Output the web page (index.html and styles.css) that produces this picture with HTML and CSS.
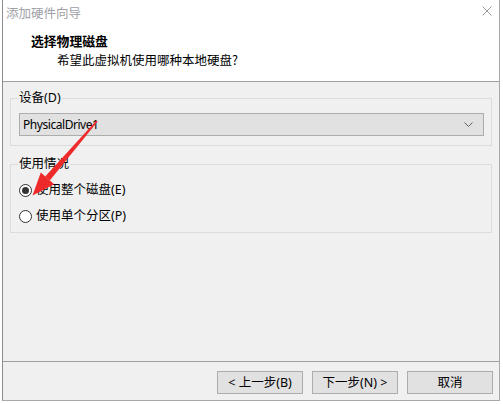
FILE: index.html
```html
<!DOCTYPE html>
<html lang="zh-CN">
<head>
<meta charset="utf-8">
<link rel="stylesheet" href="styles.css">
</head>
<body>
<div class="window">
  <div class="header">
    <div class="titlebar">
      <span class="title">添加硬件向导</span>
      <svg class="close" width="10" height="10" viewBox="0 0 10 10"><path d="M0.5 0.5 L9.5 9.5 M9.5 0.5 L0.5 9.5" stroke="#9a9a9a" stroke-width="1" fill="none"/></svg>
    </div>
    <div class="heading">
      <div class="h1">选择物理磁盘</div>
      <div class="h2">希望此虚拟机使用哪种本地硬盘?</div>
    </div>
  </div>
  <div class="content">
    <div class="group g1">
      <span class="legend">设备(D)</span>
      <div class="combo">
        <span class="combo-text">PhysicalDrive1</span>
        <svg class="chev" width="9" height="5" viewBox="0 0 9 5"><path d="M0.5 0.5 L4.5 4.5 L8.5 0.5" stroke="#606060" stroke-width="1" fill="none"/></svg>
      </div>
    </div>
    <div class="group g2">
      <span class="legend">使用情况</span>
      <div class="radio"><span class="circle checked"></span><span>使用整个磁盘(E)</span></div>
      <div class="radio"><span class="circle"></span><span>使用单个分区(P)</span></div>
    </div>
  </div>
  <div class="footer">
    <div class="btn">&lt; 上一步(B)</div>
    <div class="btn">下一步(N) &gt;</div>
    <div class="btn">取消</div>
  </div>
</div>
<svg class="arrow" width="503" height="404" viewBox="0 0 503 404">
  <polygon points="97.6,121.6 96.4,120.4 45.2,176.4 49.8,180.4" fill="#ee2a2a"/>
  <polygon points="32.5,195.5 40.8,172.5 54.2,184.3" fill="#ee2a2a"/>
</svg>
</body>
</html>
```
FILE: styles.css
```css
* { box-sizing: border-box; }
html, body { margin: 0; padding: 0; }
body {
  position: relative;
  width: 503px;
  height: 404px;
  overflow: hidden;
  background: #ffffff;
  font-family: "Noto Sans", "Noto Sans CJK SC", sans-serif;
  font-size: 12px;
  color: #000;
}
.window {
  margin-left: 2px;
  width: 498px;
  height: 401px;
  border-left: 1px solid #8c8c8c;
  border-right: 1px solid #a8a8a8;
  border-bottom: 1px solid #a8a8a8;
  display: flex;
  flex-direction: column;
  background: #f0f0f0;
}
.header {
  background: #fff;
  height: 82px;
  border-bottom: 1px solid #a0a0a0;
  flex: none;
}
.titlebar {
  height: 28px;
  display: flex;
  align-items: center;
  justify-content: space-between;
  padding: 0 7px 2px 3px;
}
.title {
  color: #a0a0a6;
  font-size: 12.5px;
  line-height: 16px;
  font-family: "Noto Sans CJK SC", sans-serif;
}
.close { display: block; margin-top: -4px; }
.heading { margin-top: 5px; }
.h1 {
  padding-left: 28px;
  font-weight: bold;
  line-height: 16px;
  font-size: 12.8px;
  font-family: "Noto Sans CJK SC", sans-serif;
}
.h2 {
  margin-top: 3px;
  padding-left: 54px;
  line-height: 16px;
  font-size: 12.5px;
  font-family: "Noto Sans CJK SC", sans-serif;
}
.content {
  flex: 1;
  padding: 16px 7px 0 7px;
  border-bottom: 1px solid #a0a0a0;
}
.group {
  position: relative;
  border: 1px solid #dcdcdc;
}
.legend {
  position: absolute;
  left: 7px;
  top: -9px;
  padding: 0 1px;
  background: #f0f0f0;
  line-height: 16px;
  font-size: 12.5px;
}
.g1 { padding: 14px 7px 9px 8px; }
.combo {
  height: 23px;
  background: #e1e1e1;
  border: 1px solid #adadad;
  display: flex;
  align-items: center;
  justify-content: space-between;
  padding: 0 10px 0 3px;
}
.combo-text { font-size: 12px; line-height: 16px; letter-spacing: -0.45px; }
.chev { display: block; }
.g2 {
  margin-top: 18px;
  padding: 17px 7px 8px 8px;
  display: flex;
  flex-direction: column;
  gap: 10px;
}
.radio {
  display: flex;
  align-items: center;
  gap: 4px;
  height: 16px;
  line-height: 16px;
  font-size: 12.5px;
}
.circle {
  width: 13px;
  height: 13px;
  border-radius: 50%;
  border: 1px solid #333;
  background: #fff;
  display: flex;
  align-items: center;
  justify-content: center;
  flex: none;
}
.circle.checked::after {
  content: "";
  width: 7px;
  height: 7px;
  border-radius: 50%;
  background: #333;
}
.footer {
  height: 38px;
  flex: none;
  display: flex;
  justify-content: flex-end;
  gap: 9px;
  padding: 9px 6px 0 0;
}
.btn {
  width: 86px;
  height: 23px;
  background: #e1e1e1;
  border: 1px solid #adadad;
  display: flex;
  align-items: center;
  justify-content: center;
  line-height: 16px;
  font-size: 12.5px;
}
.arrow {
  position: absolute;
  left: 0;
  top: 0;
  pointer-events: none;
}
```
